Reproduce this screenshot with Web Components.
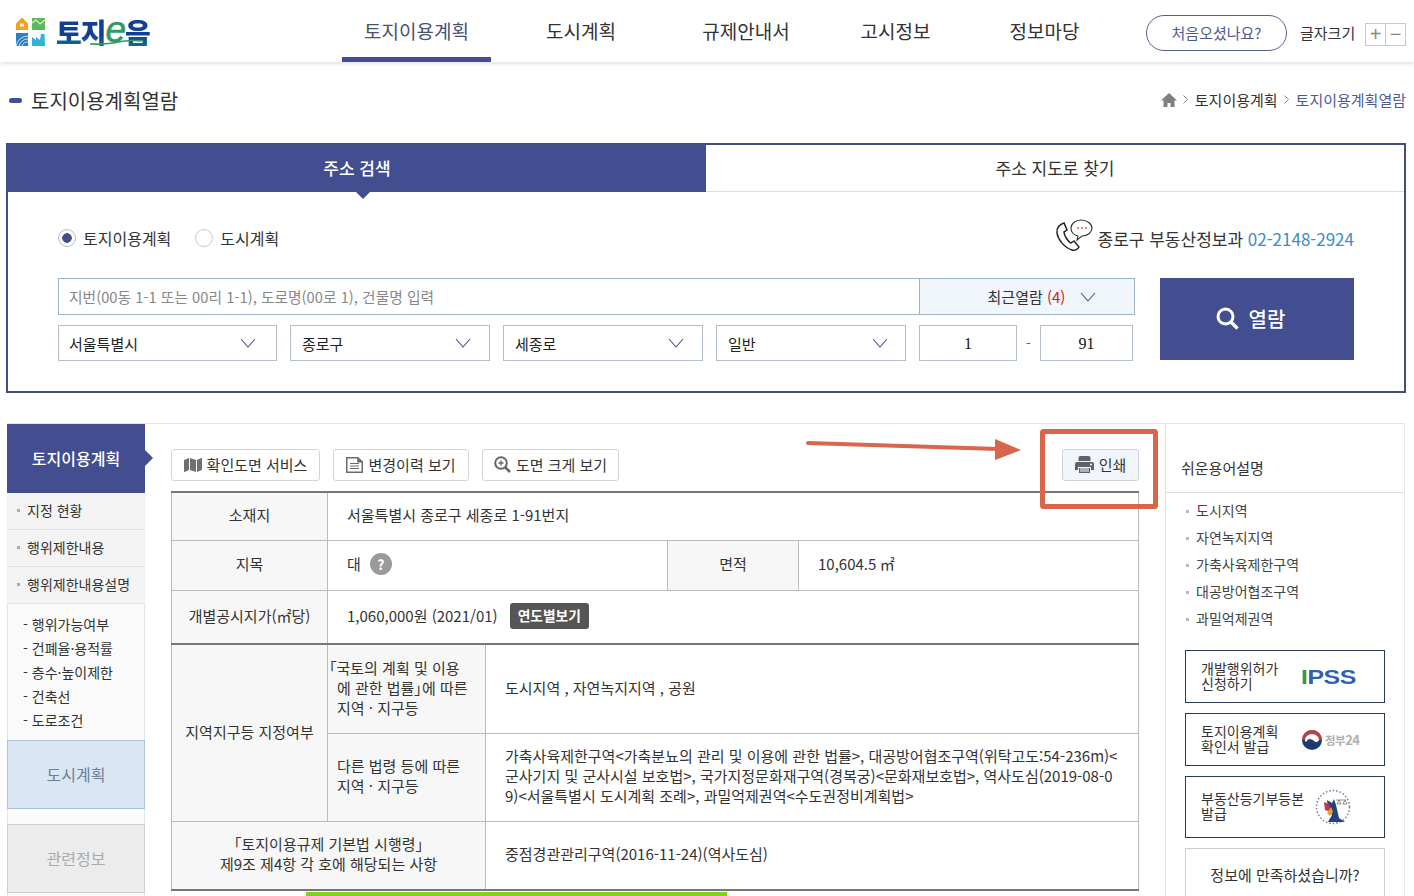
<!DOCTYPE html>
<html lang="ko">
<head>
<meta charset="utf-8">
<title>토지이용계획열람</title>
<style>
  html, body { margin: 0; height: 896px; overflow: hidden; background: #fff; }
  body { width: 1414px; position: relative; color: #333; font-family: "Noto Sans CJK KR", "Noto Sans", sans-serif; font-size: 14px; }
</style>
</head>
<body>
<site-header></site-header>
<page-title></page-title>
<search-panel></search-panel>
<main-section>
  <side-nav slot="left"></side-nav>
  <div slot="center">
    <tool-bar></tool-bar>
    <info-table></info-table>
  </div>
  <term-panel slot="right"></term-panel>
</main-section>
<print-callout></print-callout>

<script>
// small base class, every element just hands over its markup
class Box extends HTMLElement {
    constructor() {
        super();
        this.attachShadow({ mode: 'open' });
    }
    connectedCallback() {
        this.shadowRoot.innerHTML = this.render();
    }
}

const chevron = (w = 16, h = 10, c = '#44508f') => `<svg width="${w}" height="${h}" viewBox="0 0 16 10"><path d="M1 1l7 8 7-8" fill="none" stroke="${c}" stroke-width="1.1"/></svg>`;

class SiteHeader extends Box {
    render() {
        return `<style>
            :host { display: flex; height: 62px; position: relative; background: #fff; box-shadow: 0 1px 5px rgba(0,0,0,.16); z-index: 2; }
            .logo { display: flex; align-items: center; gap: 8px; width: 342px; padding: 2px 0 0 15px; box-sizing: border-box; }
            .brand { position: relative; display: flex; align-items: center; font-size: 28px; font-weight: 900; color: #0f4c92; letter-spacing: -1px; line-height: 1; }
            .brand span { background: linear-gradient(180deg, #123f8f 60%, #0f6f8a); -webkit-background-clip: text; background-clip: text; color: transparent; }
            .brand i { font: italic 400 37px/26px "Liberation Sans", sans-serif; color: #2f9a62; -webkit-text-stroke: .6px #2f9a62; letter-spacing: 0; margin: -5px -1px 0 0; }
            .brand svg { position: absolute; left: 34px; top: 21px; }
            nav { display: flex; height: 62px; }
            a { display: flex; justify-content: center; align-items: center; box-sizing: border-box; height: 62px; padding-bottom: 2px; font-size: 19px; color: #333; }
            a.on { color: #4a5170; border-bottom: 5px solid #434e91; padding: 3px 0 0; }
            .right { display: flex; align-items: center; margin-left: 27px; padding-top: 4px; }
            .first { display: flex; align-items: center; justify-content: center; width: 141px; height: 36px; box-sizing: border-box; border: 1px solid #56618f; border-radius: 18px; color: #4f5a94; font-size: 15px; padding-bottom: 1px; }
            .size { margin: -2px 0 0 13px; font-size: 15px; color: #333; }
            .pm { display: flex; margin: 3px 0 0 10px; height: 23px; width: 41px; box-sizing: border-box; border: 1px solid #c8c8c8; color: #888; font-size: 20px; line-height: 20px; }
            .pm span { flex: 1; text-align: center; font-family: "Liberation Sans", sans-serif; }
            .pm span + span { border-left: 1px solid #c8c8c8; }
        </style>
        <div class="logo">
            <svg width="33" height="30" viewBox="0 0 33 30">
                <path d="M1 6.500L7 .5l6 6V13H1z" fill="#f3a21f"/><rect x="5" y="6.500" width="4" height="3" fill="#fff"/>
                <rect x="17" y="1" width="13" height="12" fill="#5cb85c"/><path d="M17 6l4-3 4 4 5-4" fill="none" stroke="#d9f0c8" stroke-width="1.200"/>
                <rect x="1" y="16" width="12" height="13" fill="#2f7fc0"/><path d="M1 29a12 12 0 0 1 12-10M4 29a9 9 0 0 1 9-7M7 29a6 6 0 0 1 6-4" fill="none" stroke="#bfe0f2" stroke-width="1"/>
                <path d="M17 20l4 3v-3l4 3 1-6h3.500l.5 12H17z" fill="#30b4d8"/>
            </svg>
            <div class="brand"><span>토지</span><i>e</i><span>음</span>
                <svg width="52" height="6" viewBox="0 0 52 6"><path d="M0 5c14 .5 20 0 28-2s14-2 24-1" fill="none" stroke="#2f9a62" stroke-width="1.600"/></svg>
            </div>
        </div>
        <nav>
            <a class="on" style="width:149px">토지이용계획</a>
            <a style="width:180px">도시계획</a>
            <a style="width:150px">규제안내서</a>
            <a style="width:149px">고시정보</a>
            <a style="width:149px">정보마당</a>
        </nav>
        <div class="right">
            <div class="first">처음오셨나요?</div>
            <div class="size">글자크기</div>
            <div class="pm"><span>+</span><span>−</span></div>
        </div>`;
    }
}

class PageTitle extends Box {
    render() {
        return `<style>
            :host { display: flex; align-items: center; height: 81px; padding: 0 8px 4px 9px; box-sizing: border-box; }
            .dash { width: 13px; height: 5px; border-radius: 3px; background: #434e91; margin-right: 9px; }
            h1 { flex: 1; margin: 0; font-size: 20px; font-weight: 400; color: #333; }
            .crumb { display: flex; align-items: center; font-size: 15px; color: #333; padding-bottom: 2px; }
            .gt { margin: 0 7px 0 6px; }
            .cur { color: #4f5a94; }
        </style>
        <div class="dash"></div><h1>토지이용계획열람</h1>
        <div class="crumb">
            <svg width="16" height="14" viewBox="0 0 16 14"><path d="M8 0L0 7.500h2.500V14h4v-4h3v4h4V7.500H16z" fill="#808080"/></svg>
            <svg class="gt" width="5" height="9" viewBox="0 0 5 9"><path d="M.5.5l4 4-4 4" fill="none" stroke="#888"/></svg>
            <span>토지이용계획</span>
            <svg class="gt" width="5" height="9" viewBox="0 0 5 9"><path d="M.5.5l4 4-4 4" fill="none" stroke="#888"/></svg>
            <span class="cur">토지이용계획열람</span>
        </div>`;
    }
}

class SearchPanel extends Box {
    render() {
        return `<style>
            :host { display: block; box-sizing: border-box; width: 1400px; height: 250px; margin-left: 6px; border: 2px solid #434e7f; }
            .tabs { display: flex; height: 47px; }
            .tabs div { display: flex; align-items: center; justify-content: center; font-size: 17px; padding-bottom: 2px; box-sizing: border-box; }
            .act { position: relative; width: 698px; background: #434e91; color: #fff; font-weight: 500; }
            .act::after { content: ""; position: absolute; left: 347px; top: 46px; border: 8px solid transparent; border-top: 8px solid #434e91; border-bottom: 0; }
            .oth { flex: 1; border-bottom: 1px solid #ddd; color: #333; }
            .top { display: flex; justify-content: space-between; height: 86px; padding: 0 49px 0 50px; box-sizing: border-box; }
            .radios { display: flex; align-items: center; height: 92px; font-size: 16px; color: #333; }
            .radio { box-sizing: border-box; width: 18px; height: 18px; border-radius: 50%; border: 1px solid #ccc; margin-right: 7px; background: #fff; }
            .radio.on { border-color: #bbb; background: radial-gradient(circle, #434e91 0 4.500px, #fff 5px); }
            .gap { width: 24px; }
            .tel { display: flex; align-items: flex-end; height: 59px; font-size: 17px; padding-right: 1px; }
            .tel svg { margin: 0 5px -1px 0; }
            .tel span { line-height: 24px; }
            .tel b { font-weight: 400; color: #3f8bc6; }
            .form { display: flex; gap: 25px; padding-left: 50px; }
            .fields { width: 1077px; }
            .line { display: flex; height: 37px; box-sizing: border-box; border: 1px solid #9fb3c4; margin-bottom: 10px; }
            .ph { flex: 1; display: flex; align-items: center; padding-left: 10px; color: #888; font-size: 14.750px; }
            .recent { display: flex; align-items: center; justify-content: center; gap: 15px; width: 215px; background: #f1f6fd; border-left: 1px solid #9fb3c4; font-size: 15px; padding-left: 30px; box-sizing: border-box; }
            .recent em { font-style: normal; color: #c4262e; }
            .row { display: flex; align-items: center; height: 36px; }
            .sel { display: flex; align-items: center; justify-content: space-between; box-sizing: border-box; height: 36px; margin-right: 13px; padding: 0 18px 0 11px; border: 1px solid #b3c0cc; font-size: 15px; color: #222; }
            .num { display: flex; align-items: center; justify-content: center; box-sizing: border-box; height: 36px; padding-top: 1px; border: 1px solid #b3c0cc; font: 16px "Liberation Serif", serif; color: #111; }
            .dash { width: 23px; text-align: center; color: #666; }
            .go { display: flex; align-items: center; justify-content: center; gap: 10px; width: 194px; height: 82px; background: #434e91; color: #fff; font-size: 20px; font-weight: 500; padding: 0 13px 2px 0; box-sizing: border-box; }
        </style>
        <div class="tabs"><div class="act">주소 검색</div><div class="oth">주소 지도로 찾기</div></div>
        <div class="top">
            <div class="radios">
                <div class="radio on"></div>토지이용계획<div class="gap"></div>
                <div class="radio"></div>도시계획
            </div>
            <div class="tel">
                <svg width="38" height="33" viewBox="0 0 38 33">
                    <path d="M9 4C5 5 1 9 2 14c1 7 8 15 15 17 3 1 6-1 7-3l-5-6-3 2c-3-1-7-8-7-11l3-2z" fill="none" stroke="#222" stroke-width="1.500"/>
                    <path d="M26 1c-6 0-10 4-10 8 0 4 3 7 7 8l-1 4 5-4c6 0 10-4 10-8s-5-8-11-8z" fill="#fff" stroke="#333" stroke-width="1.100"/>
                    <circle cx="23" cy="9" r="1" fill="#d9664a"/><circle cx="27" cy="9" r="1" fill="#d9664a"/><circle cx="31" cy="9" r="1" fill="#d9664a"/>
                </svg>
                <span>종로구 부동산정보과 <b>02-2148-2924</b></span>
            </div>
        </div>
        <div class="form">
            <div class="fields">
                <div class="line">
                    <div class="ph">지번(00동 1-1 또는 00리 1-1), 도로명(00로 1), 건물명 입력</div>
                    <div class="recent"><span>최근열람 <em>(4)</em></span>${chevron()}</div>
                </div>
                <div class="row">
                    <div class="sel" style="width:219px;padding:0 20px 0 10px">서울특별시${chevron()}</div>
                    <div class="sel" style="width:200px">종로구${chevron()}</div>
                    <div class="sel" style="width:200px">세종로${chevron()}</div>
                    <div class="sel" style="width:190px;padding-right:17px">일반${chevron()}</div>
                    <div class="num" style="width:98px">1</div>
                    <div class="dash">-</div>
                    <div class="num" style="width:93px">91</div>
                </div>
            </div>
            <div class="go">
                <svg width="23" height="23" viewBox="0 0 23 23"><circle cx="9.500" cy="9.500" r="7.500" fill="none" stroke="#fff" stroke-width="3"/><path d="M15 15l6.500 6.500" stroke="#fff" stroke-width="3.400"/></svg>
                열람
            </div>
        </div>`;
    }
}

class MainSection extends Box {
    render() {
        return `<style>
            :host { display: grid; grid-template-columns: 138px 1020px 240px; margin: 30px 0 0 7px; height: 473px; border-top: 1px solid #e5e5e5; width: 1398px; box-sizing: border-box; }
            .c { padding-left: 26px; box-sizing: border-box; }
            .r { border-left: 1px solid #e5e5e5; border-right: 1px solid #e5e5e5; }
        </style>
        <slot name="left"></slot>
        <div class="c"><slot name="center"></slot></div>
        <div class="r"><slot name="right"></slot></div>`;
    }
}

class SideNav extends Box {
    render() {
        return `<style>
            :host { display: block; position: relative; background: #fafafa; box-shadow: inset 1px 0 #e5e5e5, inset -1px 0 #e5e5e5; height: 472px; font-size: 14px; color: #333; }
            .head { position: relative; display: flex; align-items: center; justify-content: center; height: 69px; background: #434e91; color: #fff; font-size: 16px; font-weight: 500; padding-bottom: 2px; box-sizing: border-box; }
            .head::after { content: ""; position: absolute; left: 138px; top: 26px; border: 8px solid transparent; border-left: 8px solid #434e91; border-right: 0; }
            .item { display: flex; align-items: center; height: 37px; box-sizing: border-box; padding: 0 0 2px 10px; border-bottom: 1px solid #e3e3e3; background: #f4f4f4; }
            .item::before { content: ""; width: 3px; height: 3px; background: #aaa; margin-right: 7px; }
            ul { list-style: none; margin: 0; padding: 8px 0 8px 16px; }
            li { height: 24px; line-height: 24px; }
            .blk { display: flex; align-items: center; justify-content: center; box-sizing: border-box; height: 69px; font-size: 16px; padding-bottom: 2px; }
            .city { background: #dae6f3; border: 1px solid #a9c3dc; color: #6d8094; }
            .rel { margin-top: 15px; background: #ececec; border: 1px solid #ccc; color: #aaa; }
        </style>
        <div class="head">토지이용계획</div>
        <div class="item">지정 현황</div>
        <div class="item">행위제한내용</div>
        <div class="item">행위제한내용설명</div>
        <ul><li>- 행위가능여부</li><li>- 건폐율·용적률</li><li>- 층수·높이제한</li><li>- 건축선</li><li>- 도로조건</li></ul>
        <div class="blk city">도시계획</div>
        <div class="blk rel">관련정보</div>`;
    }
}

class ToolButton extends Box {
    render() {
        return `<style>
            :host { display: flex; align-items: center; justify-content: center; gap: 5px; box-sizing: border-box; height: 32px; padding-bottom: 1px; border: 1px solid #d4d4d4; border-radius: 3px; font-size: 15px; color: #333; background: #fff; }
            :host([print]) { background: #f1f6fd; border-color: #ccd3da; }
            svg { display: block; }
        </style>
        <slot name="icon"></slot><slot></slot>`;
    }
}

class ToolBar extends Box {
    render() {
        return `<style>
            :host { display: flex; gap: 13px; height: 67px; padding-top: 25px; width: 968px; box-sizing: border-box; }
            .sp { flex: 1; }
        </style>
        <tool-button style="width:149px"><svg slot="icon" width="18" height="16" viewBox="0 0 576 512"><path fill="#707070" d="M0 117.660v346.320c0 11.320 11.430 19.060 21.940 14.860L160 416V32L20.120 87.950A32 32 0 0 0 0 117.660zM192 416l192 64V96L192 32v384zM554.060 33.160L416 96v384l139.880-55.950A32 32 0 0 0 576 394.340V48.020c0-11.320-11.430-19.060-21.940-14.860z"/></svg>확인도면 서비스</tool-button>
        <tool-button style="width:136px"><svg slot="icon" width="17" height="16" viewBox="0 0 17 16"><path d="M0 0h12l5 4.500V16H0z" fill="#6a6a6a"/><path d="M1.500 1.500h9.700v4h4.300v9h-14z" fill="#fff"/><path d="M4 6.500h9M4 9h9M4 11.500h9" stroke="#6a6a6a"/></svg>변경이력 보기</tool-button>
        <tool-button style="width:137px"><svg slot="icon" width="17" height="17" viewBox="0 0 17 17"><circle cx="7" cy="7" r="5.800" fill="none" stroke="#666" stroke-width="2"/><path d="M11 11l5 5" stroke="#666" stroke-width="2.600"/><path d="M4.500 7h5M7 4.500v5" stroke="#666" stroke-width="1.400"/></svg>도면 크게 보기</tool-button>
        <div class="sp"></div>
        <tool-button print style="width:77px"><svg slot="icon" width="19" height="17" viewBox="0 0 19 17"><path d="M3.500 5V2a2 2 0 0 1 2-2h8a2 2 0 0 1 2 2v3z" fill="#5f6368"/><path d="M2 6h15a2 2 0 0 1 2 2v6h-3v-3H3v3H0V8a2 2 0 0 1 2-2z" fill="#5f6368"/><path d="M4 12h11v5H4z" fill="#5f6368"/><path d="M5 13h9M5 15h9" stroke="#fff"/><circle cx="16" cy="8.500" r="1" fill="#fff"/></svg>인쇄</tool-button>`;
    }
}

class InfoTable extends Box {
    render() {
        return `<style>
            :host { display: block; width: 968px; font-size: 15px; color: #333; }
            table { border-collapse: collapse; table-layout: fixed; width: 968px; border-top: 2px solid #777; border-bottom: 2px solid #777; }
            th, td { border: 1px solid #bbb; font-weight: 400; padding: 0 19px 2px; line-height: 20px; text-align: left; word-break: break-all; }
            th { background: #f7f7f7; text-align: center; padding: 0 8px 2px; word-break: keep-all; }
            .sub { text-align: left; padding: 0 0 2px 9px; }
            .th2 { border-top: 2px solid #777; }
            .pl { font-feature-settings: "palt"; }
            .hang { font-feature-settings: "palt"; margin-left: -8px; }
            .mid { display: flex; align-items: center; }
            .q { display: inline-flex; align-items: center; justify-content: center; width: 22px; height: 22px; border-radius: 50%; background: #9a9a9a; color: #fff; font-size: 14px; font-weight: 700; margin-left: 9px; }
            .tag { padding: 0 8px; height: 26px; line-height: 25px; margin-left: 12px; border-radius: 3px; background: #555; color: #fff; font-size: 13.750px; font-weight: 700; }
            .bar { height: 6px; margin: 1px 0 0 135px; width: 421px; background: #7ed321; }
        </style>
        <table>
            <colgroup><col style="width:156px"><col style="width:158px"><col style="width:182px"><col style="width:131px"><col></colgroup>
            <tr style="height:48px"><th>소재지</th><td colspan="4">서울특별시 종로구 세종로 1-91번지</td></tr>
            <tr style="height:50px"><th>지목</th><td colspan="2"><div class="mid">대<span class="q">?</span></div></td><th>면적</th><td>10,604.5 ㎡</td></tr>
            <tr style="height:54px"><th>개별공시지가(㎡당)</th><td colspan="4"><div class="mid">1,060,000원 (2021/01)<span class="tag">연도별보기</span></div></td></tr>
            <tr class="t" style="height:89px"><th rowspan="2" class="th2">지역지구등 지정여부</th><th class="sub th2"><span class="hang">「</span>국토의 계획 및 이용<br>에 관한 법률<span class="pl">」</span>에 따른<br>지역 · 지구등</th><td colspan="3" class="th2">도시지역 , 자연녹지지역 , 공원</td></tr>
            <tr style="height:88px"><th class="sub">다른 법령 등에 따른<br>지역 · 지구등</th><td colspan="3">가축사육제한구역&lt;가축분뇨의 관리 및 이용에 관한 법률&gt;, 대공방어협조구역(위탁고도:54-236m)&lt;군사기지 및 군사시설 보호법&gt;, 국가지정문화재구역(경복궁)&lt;문화재보호법&gt;, 역사도심(2019-08-09)&lt;서울특별시 도시계획 조례&gt;, 과밀억제권역&lt;수도권정비계획법&gt;</td></tr>
            <tr style="height:69px"><th colspan="2">「토지이용규제 기본법 시행령」<br>제9조 제4항 각 호에 해당되는 사항</th><td colspan="3">중점경관관리구역(2016-11-24)(역사도심)</td></tr>
        </table>
        <div class="bar"></div>`;
    }
}

class TermPanel extends Box {
    render() {
        return `<style>
            :host { display: block; font-size: 14px; color: #333; }
            h2 { margin: 0 0 4px; height: 69px; padding: 33px 0 0 15px; box-sizing: border-box; border-bottom: 1px solid #ddd; font-size: 15px; font-weight: 400; line-height: 22px; }
            ul { list-style: none; margin: 0 0 18px; padding: 0 0 0 20px; }
            li { position: relative; height: 27px; line-height: 27px; padding-left: 10px; font-size: 14px; color: #444; }
            li::before { content: ""; position: absolute; left: 0; top: 13px; width: 3px; height: 3px; background: #bbb; }
            .card { display: flex; align-items: center; box-sizing: border-box; width: 200px; margin: 0 0 10px 19px; padding: 0 0 0 15px; border: 1px solid #2b3a55; font-size: 14px; line-height: 15px; color: #333; }
            .card div { width: 100px; flex: none; word-break: keep-all; padding-bottom: 2px; }
            .card.q { height: 60px; justify-content: center; padding: 0 0 6px 0; border-color: #ccc; font-size: 15px; }
            .card.q div { width: auto; }
            .ipss { display: inline-block; transform: scaleX(1.200); transform-origin: left; font: 900 21px/1 "Liberation Sans", sans-serif; color: #2f62ad; letter-spacing: -.5px; }
            .ipss b { color: #3c9a3c; }
            .gov { display: flex; align-items: center; gap: 3px; margin-left: 1px; font-size: 11.500px; font-weight: 700; color: #b0b0b0; letter-spacing: -.5px; }
            .gov em { font-style: normal; font-size: 13px; }
        </style>
        <h2>쉬운용어설명</h2>
        <ul><li>도시지역</li><li>자연녹지지역</li><li>가축사육제한구역</li><li>대공방어협조구역</li><li>과밀억제권역</li></ul>
        <div class="card" style="height:53px"><div>개발행위허가 신청하기</div><span class="ipss"><b>I</b>PSS</span></div>
        <div class="card" style="height:53px"><div>토지이용계획 확인서 발급</div><span class="gov">
            <svg width="20" height="20" viewBox="0 0 20 20"><circle cx="10" cy="10" r="10" fill="#1f3a6e"/><path d="M0 10a10 10 0 0 1 20 0z" fill="#b9404f"/><path d="M3 11c0-5 4-7 7-7 4 0 7 3 7 6-1 2-3 3-5 1-3-3-6-3-7 0-1 1-2 1-2 0z" fill="#fff"/></svg><span>정부<em>24</em></span></span></div>
        <div class="card" style="height:62px;padding-right:0"><div style="width:115px">부동산등기부등본 발급</div>
            <svg width="36" height="36" viewBox="0 0 36 36" style="margin-left:-1px">
                <circle cx="18" cy="18" r="16.500" fill="none" stroke="#6b7f9e" stroke-width="1.500" stroke-dasharray="1.500 2"/>
                <path d="M12 11l5 3 2-4 2 6 3 13 6 4H13l4-7-4-7z" fill="#27407f"/><path d="M9 13l5 2 2 8-6-2z" fill="#c8344a"/><path d="M12 24l4-6 2 5-3 4z" fill="#e0a52c"/><path d="M21 11h10M24 11l-2 4h4zM30 11l-2 4h4z" fill="none" stroke="#666" stroke-width=".7"/>
            </svg></div>
        <div class="card q"><div>정보에 만족하셨습니까?</div></div>`;
    }
}

// the hand drawn note on top of the screenshot
class PrintCallout extends Box {
    render() {
        return `<style>
            :host { position: absolute; left: 800px; top: 425px; width: 365px; height: 90px; pointer-events: none; z-index: 5; }
        </style>
        <svg width="365" height="90" viewBox="800 425 365 90">
            <path d="M808 443L998 449" stroke="#d9664a" stroke-width="4" stroke-linecap="round"/>
            <path d="M995 439l26 11-26 10z" fill="#d9664a"/>
            <rect x="1042.500" y="431.500" width="113" height="75" rx="1" fill="none" stroke="#d9664a" stroke-width="5"/>
        </svg>`;
    }
}

customElements.define('site-header', SiteHeader);
customElements.define('page-title', PageTitle);
customElements.define('search-panel', SearchPanel);
customElements.define('main-section', MainSection);
customElements.define('side-nav', SideNav);
customElements.define('tool-button', ToolButton);
customElements.define('tool-bar', ToolBar);
customElements.define('info-table', InfoTable);
customElements.define('term-panel', TermPanel);
customElements.define('print-callout', PrintCallout);
</script>
</body>
</html>
